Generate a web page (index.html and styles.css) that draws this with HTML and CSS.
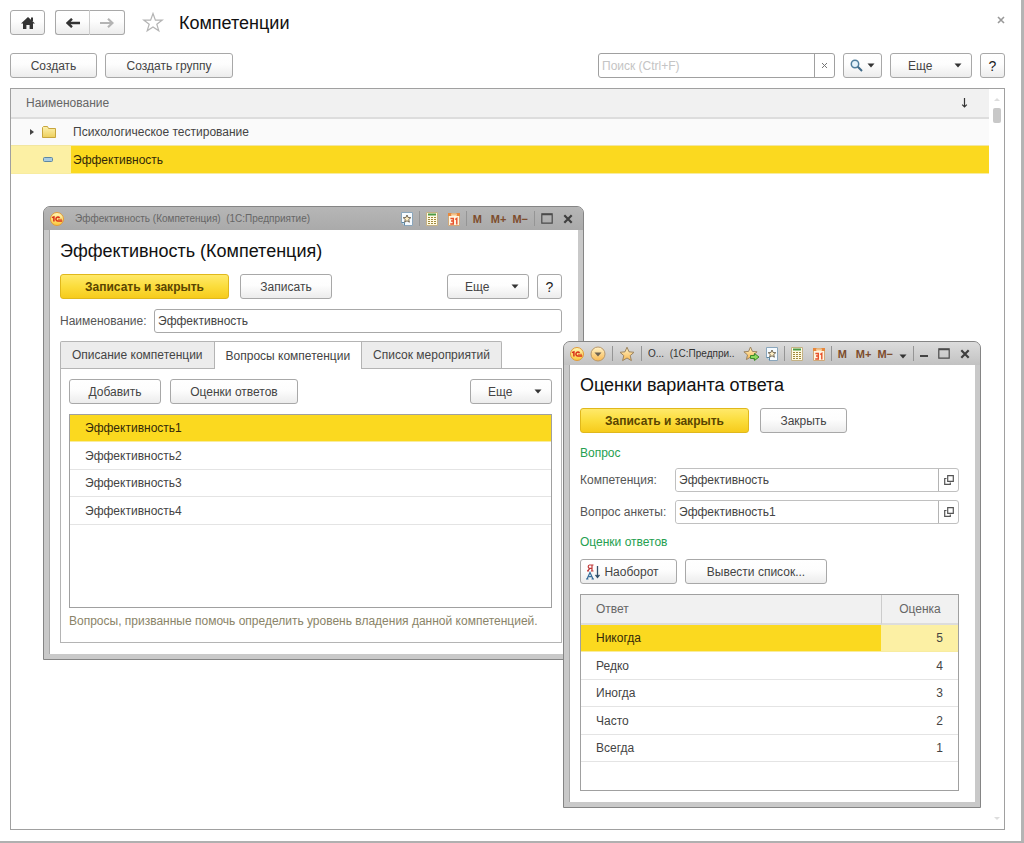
FILE: index.html
```html
<!DOCTYPE html>
<html lang="ru">
<head>
<meta charset="utf-8">
<title>Компетенции</title>
<link rel="stylesheet" href="styles.css">
</head>
<body>
<svg class="defs" width="0" height="0" aria-hidden="true">
  <defs>
    <linearGradient id="gold" x1="0" y1="0" x2="0" y2="1"><stop offset="0" stop-color="#fff3c8"/><stop offset="1" stop-color="#f9b850"/></linearGradient>
    <linearGradient id="logo-fill" x1="0" y1="0" x2="0" y2="1"><stop offset="0" stop-color="#fff8b8"/><stop offset="1" stop-color="#fbc83a"/></linearGradient>
    <linearGradient id="folder" x1="0" y1="0" x2="0" y2="1"><stop offset="0" stop-color="#fdf2b0"/><stop offset="1" stop-color="#edcf5c"/></linearGradient>
    <symbol id="logo" viewBox="0 0 14 14"><circle cx="7" cy="7" r="6.5" fill="url(#logo-fill)" stroke="#e09a3a"/><path d="M2 5.600L3.900 4.800V9.600M9.600 5.900A2 2 0 1 0 8 9H12.200" fill="none" stroke="#d8301a" stroke-width="1.500"/><path d="M8 7.300H12" stroke="#d8301a" stroke-width=".7"/></symbol>
    <symbol id="page-star" viewBox="0 0 12 14"><path d="M.5 .5H11.5V13.5H3.500L.5 10.500Z" fill="#f6fbff" stroke="#8aa6bc"/><path d="M.5 10.500H3.500V13.500" fill="#cfe0ec" stroke="#5d87a3"/><path d="M6 3l1.100 2.500 2.700.2-2.100 1.800.7 2.700L6 8.800l-2.400 1.400.7-2.700-2.100-1.800 2.700-.2Z" fill="#ffefc4" stroke="#665b4a" stroke-width=".9"/></symbol>
    <symbol id="calc" viewBox="0 0 12 14"><path d="M.5 .5H11.5V13.5H.5Z" fill="#fffae4" stroke="#c4b184"/><path d="M2 2.500H10" stroke="#4d9a44" stroke-width="2"/><path d="M2 5.500H10M2 7.500H10M2 9.500H10M2 11.500H10" stroke="#a08a3c" stroke-width="1.200" stroke-dasharray="2 1"/></symbol>
    <symbol id="calendar" viewBox="0 0 12 14"><path d="M.5 1.500H11.5V13.5H.5Z" fill="#fff5e0" stroke="#d0a878"/><path d="M0 2.500H3.500M8.500 2.500H12" stroke="#e8883c" stroke-width="3"/><path d="M3.500 2.500H8.500" stroke="#f4c088" stroke-width="2"/><path d="M2.400 6.500H5.300V12H2.200M3 9H5.300M7.200 7.500L8.800 6.300V12.600" fill="none" stroke="#e8502a" stroke-width="1.400"/></symbol>
    <symbol id="maximize" viewBox="0 0 12 11"><path d="M.8 .8H11.2V10.2H.8Z" fill="none" stroke="#4a4a4a" stroke-width="1.2"/><path d="M1 1.5H11" stroke="#4a4a4a" stroke-width="1.5"/></symbol>
    <symbol id="close" viewBox="0 0 10 10"><path d="M1.3 1.3L8.7 8.7M8.7 1.3L1.3 8.7" stroke="#3f3f3f" stroke-width="2.2"/></symbol>
    <symbol id="caret" viewBox="0 0 8 5"><path d="M.5 .5H7.500L4 4.500Z" fill="#333"/></symbol>
    <symbol id="open" viewBox="0 0 10 10"><path d="M3.7 .7H9.3V6.3H3.7ZM2.5 3.5H.7V9.3H6.3V7.5" fill="none" stroke="#555" stroke-width="1.2"/></symbol>
    <symbol id="gold-star" viewBox="0 0 16 16"><path d="M8 1.2l2 4.6 5 .5-3.8 3.3 1.2 5L8 12l-4.400 2.600 1.200-5L1 6.300l5-.5Z" fill="url(#gold)" stroke="#9c8460"/></symbol>
  </defs>
</svg>

<main class="page">
  <header class="page-head">
    <button class="btn nav" aria-label="Домой"><svg width="14" height="12" viewBox="0 0 14 12"><path d="M7 0L14 6.400H12V12H8.600V8H5.400V12H2V6.400H0L7 0Z" fill="#333"/><path d="M10 .6H12V4H10Z" fill="#333"/></svg></button>
    <div class="nav-pair">
      <button class="btn nav" aria-label="Назад"><svg width="14" height="10" viewBox="0 0 14 10"><path d="M14 5H3M6 .8L1.600 5 6 9.200" fill="none" stroke="#333" stroke-width="2.400"/></svg></button>
      <button class="btn nav" aria-label="Вперед" disabled><svg width="14" height="10" viewBox="0 0 14 10"><path d="M0 5H11M8 .8L12.400 5 8 9.200" fill="none" stroke="#b4b4b4" stroke-width="2.200"/></svg></button>
    </div>
    <svg class="fav" width="22" height="21" viewBox="0 0 22 21"><path d="M11 1.500L13.400 8.100 20.300 8.100 14.800 12.200 16.800 18.800 11 14.900 5.200 18.800 7.200 12.200 1.700 8.100 8.600 8.100Z" fill="#fff" stroke="#b4b4b4" stroke-width="1.200"/></svg>
    <h1 class="title">Компетенции</h1>
    <button class="page-close" aria-label="Закрыть"><svg width="8" height="8" viewBox="0 0 8 8"><path d="M1 1L7 7M7 1L1 7" stroke="#999" stroke-width="1.600"/></svg></button>
  </header>

  <div class="toolbar">
    <button class="btn">Создать</button>
    <button class="btn w-128">Создать группу</button>
    <div class="search">
      <input type="text" placeholder="Поиск (Ctrl+F)" aria-label="Поиск">
      <button aria-label="Очистить"><svg width="7" height="7" viewBox="0 0 7 7"><path d="M1 1L6 6M6 1L1 6" stroke="#777"/></svg></button>
    </div>
    <button class="btn find" aria-label="Найти"><svg width="13" height="13" viewBox="0 0 13 13"><circle cx="5" cy="5" r="3.700" fill="#e4f2fa" stroke="#4f7d9c" stroke-width="1.500"/><path d="M7.800 7.800L12 12" stroke="#3f6a88" stroke-width="2"/></svg><svg width="8" height="5"><use href="#caret"/></svg></button>
    <button class="btn more">Еще<svg width="8" height="5"><use href="#caret"/></svg></button>
    <button class="btn help">?</button>
  </div>

  <section class="list">
    <table class="grid">
      <thead><tr><th colspan="2"><div class="sort-head">Наименование<svg width="7" height="10" viewBox="0 0 7 10"><path d="M3.500 0V9M1.200 6.600L3.500 9 5.800 6.600" fill="none" stroke="#333" stroke-width="1.200"/></svg></div></th></tr></thead>
      <tbody>
        <tr class="group"><td class="mark"><div class="marks"><svg width="4" height="6" viewBox="0 0 4 6"><path d="M0 0L4 3 0 6Z" fill="#444"/></svg><svg width="14" height="12" viewBox="0 0 14 12"><path d="M.5 11.500V1.500L1.500 .5H5.500L6.500 2.500H13.500V11.500Z" fill="url(#folder)" stroke="#c7a53d"/></svg></div></td><td>Психологическое тестирование</td></tr>
        <tr class="selected"><td class="mark"><div class="marks item"><svg width="10" height="5" viewBox="0 0 10 5"><rect x=".5" y=".5" width="9" height="4" rx="1" fill="#a9cbe0" stroke="#5d87a3"/></svg></div></td><td>Эффективность</td></tr>
      </tbody>
    </table>
    <div class="scroll"><svg width="6" height="4" viewBox="0 0 6 4"><path d="M0 4L3 1 6 4Z" fill="#ddd"/></svg><span class="thumb"></span><svg class="down" width="6" height="4" viewBox="0 0 6 4"><path d="M0 0L3 3 6 0Z" fill="#ddd"/></svg></div>
  </section>
</main>

<section class="window competence">
  <div class="titlebar">
    <svg width="14" height="14"><use href="#logo"/></svg>
    <span class="caption">Эффективность (Компетенция)&nbsp; (1С:Предприятие)</span>
    <span class="tools">
      <svg width="12" height="14"><use href="#page-star"/></svg><i></i>
      <svg width="12" height="14"><use href="#calc"/></svg>
      <svg class="cal" width="12" height="14"><use href="#calendar"/></svg><i></i>
      <b class="mem">M</b><b>M+</b><b>M−</b><i></i>
      <svg class="spaced" width="12" height="11"><use href="#maximize"/></svg>
      <svg width="10" height="10"><use href="#close"/></svg>
    </span>
  </div>
  <div class="body">
    <h2 class="title">Эффективность (Компетенция)</h2>
    <div class="actions">
      <button class="btn primary">Записать и закрыть</button>
      <button class="btn w-92">Записать</button>
      <button class="btn more push">Еще<svg width="8" height="5"><use href="#caret"/></svg></button>
      <button class="btn help">?</button>
    </div>
    <div class="field name"><label for="name">Наименование:</label><input id="name" type="text" value="Эффективность"></div>
    <div class="tabs" role="tablist">
      <button role="tab">Описание компетенции</button>
      <button role="tab" class="active" aria-selected="true">Вопросы компетенции</button>
      <button role="tab">Список мероприятий</button>
    </div>
    <div class="panel">
      <div class="actions">
        <button class="btn w-92">Добавить</button>
        <button class="btn w-128">Оценки ответов</button>
        <button class="btn more push">Еще<svg width="8" height="5"><use href="#caret"/></svg></button>
      </div>
      <ul class="questions">
        <li class="current">Эффективность1</li>
        <li>Эффективность2</li>
        <li>Эффективность3</li>
        <li>Эффективность4</li>
      </ul>
      <p class="hint">Вопросы, призванные помочь определить уровень владения данной компетенцией.</p>
    </div>
  </div>
</section>

<section class="window scores">
  <div class="titlebar">
    <svg width="14" height="14"><use href="#logo"/></svg>
    <svg width="16" height="16" viewBox="0 0 16 16"><circle cx="8" cy="8" r="7" fill="url(#gold)" stroke="#b8986c"/><path d="M4.500 6.500H11.500L8 10.500Z" fill="#6c6252"/></svg><i></i>
    <svg width="16" height="16"><use href="#gold-star"/></svg><i></i>
    <span class="caption">О...&nbsp; (1С:Предпри..</span>
    <span class="tools">
      <svg width="17" height="16" viewBox="0 0 17 16"><path d="M7.500 1l1.900 4.400 4.700.4-3.600 3.100 1.100 4.700-4.100-2.500-4.100 2.500 1.100-4.700L.9 5.800l4.700-.4Z" fill="url(#gold)" stroke="#9c8460"/><path d="M7.500 9.500H11.500V7.500L16 11 11.500 14.500V12.500H7.500Z" fill="#8edb5e" stroke="#3c8a2c"/></svg>
      <svg width="12" height="14"><use href="#page-star"/></svg><i></i>
      <svg width="12" height="14"><use href="#calc"/></svg>
      <svg class="cal" width="12" height="14"><use href="#calendar"/></svg><i></i>
      <b class="mem">M</b><b>M+</b><b>M−</b>
      <svg class="low" width="8" height="5"><use href="#caret"/></svg><i></i>
      <svg class="low spaced" width="8" height="3" viewBox="0 0 8 3"><path d="M0 1H8" stroke="#444" stroke-width="2"/></svg>
      <svg class="spaced" width="12" height="11"><use href="#maximize"/></svg>
      <svg width="10" height="10"><use href="#close"/></svg>
    </span>
  </div>
  <div class="body">
    <h2 class="title">Оценки варианта ответа</h2>
    <div class="actions">
      <button class="btn primary">Записать и закрыть</button>
      <button class="btn">Закрыть</button>
    </div>
    <h3 class="group-title">Вопрос</h3>
    <div class="field link"><label for="comp">Компетенция:</label><span class="combo"><input id="comp" type="text" value="Эффективность"><button aria-label="Открыть"><svg width="10" height="10"><use href="#open"/></svg></button></span></div>
    <div class="field link"><label for="quest">Вопрос анкеты:</label><span class="combo"><input id="quest" type="text" value="Эффективность1"><button aria-label="Открыть"><svg width="10" height="10"><use href="#open"/></svg></button></span></div>
    <h3 class="group-title">Оценки ответов</h3>
    <div class="actions tight">
      <button class="btn reverse"><svg width="15" height="16" viewBox="0 0 15 16"><path d="M6 7V1H3.500A1.700 1.700 0 0 0 3.500 4.300H6M4 4.300L1.500 7M1 7H3M5 7H7.500M5 1H7.500" fill="none" stroke="#c03a3a" stroke-width="1.200"/><path d="M1 15L4 8.500 7 15M2.200 12.700H5.800M0 15H2.500M5.500 15H8" fill="none" stroke="#386f9c" stroke-width="1.200"/><path d="M11.500 2V13M9.500 10.800L11.500 13.500 13.500 10.800" fill="none" stroke="#31506b" stroke-width="1.300"/></svg>Наоборот</button>
      <button class="btn w-142">Вывести список...</button>
    </div>
    <div class="answers">
      <table class="grid">
        <thead><tr><th>Ответ</th><th class="score">Оценка</th></tr></thead>
        <tbody>
          <tr class="selected"><td>Никогда</td><td class="score">5</td></tr>
          <tr><td>Редко</td><td class="score">4</td></tr>
          <tr><td>Иногда</td><td class="score">3</td></tr>
          <tr><td>Часто</td><td class="score">2</td></tr>
          <tr><td>Всегда</td><td class="score">1</td></tr>
        </tbody>
      </table>
    </div>
  </div>
</section>
</body>
</html>
```
FILE: styles.css
```css
* { box-sizing: border-box; }
body {
  margin: 0;
  background: #fff;
  color: #444;
  font: 12px/16px "Liberation Sans", Arial, sans-serif;
}
button, input { font: inherit; color: inherit; margin: 0; }
svg { flex: none; display: block; }
.defs { position: absolute; }
h1, h2, h3, p, ul { margin: 0; padding: 0; font-weight: normal; }
.title { font-size: 18px; line-height: 24px; color: #111; white-space: nowrap; }

.page {
  display: flex;
  flex-direction: column;
  min-height: 100vh;
  padding: 10px 16px 11px 10px;
  border-right: 3px solid #b4b4b4;
  border-bottom: 2px solid #b0b0b0;
}
.page-head { display: flex; align-items: center; height: 25px; }
.fav { margin: 0 15px 0 17px; }
.page-close { margin-left: auto; align-self: flex-start; padding: 6px 0; border: 0; background: none; }

.btn {
  display: inline-flex;
  align-items: center;
  justify-content: center;
  flex: none;
  width: 87px;
  height: 25px;
  padding: 0;
  border: 1px solid #a8a8a8;
  border-radius: 3px;
  background: linear-gradient(#fff, #fdfdfd 45%, #ececec);
  color: #444;
  white-space: nowrap;
}
.btn.nav { width: 35px; }
.nav-pair { display: flex; margin-left: 10px; }
.nav-pair .btn:first-child { border-radius: 3px 0 0 3px; border-right-color: #ccc; }
.nav-pair .btn:last-child { border-radius: 0 3px 3px 0; border-left: 0; }
.btn.w-92 { width: 92px; }
.btn.w-128 { width: 128px; }
.btn.w-142 { width: 142px; }
.btn.primary {
  width: 169px;
  border-color: #e0b81c;
  background: linear-gradient(#ffe96a, #fbdd3c 50%, #f6cb1c);
  color: #5a4500;
  font-weight: bold;
}
.btn.more { width: 82px; justify-content: space-between; padding: 0 9px 0 17px; }
.btn.help { width: 25px; font-size: 14px; color: #222; }
.btn.find { width: 39px; gap: 4px; }
.btn.reverse { width: 97px; gap: 3px; padding-right: 12px; }

.toolbar { display: flex; gap: 8px; margin-top: 18px; }
.search {
  display: flex;
  width: 237px;
  height: 25px;
  margin-left: auto;
  border: 1px solid #a0a0a0;
  border-radius: 3px;
}
.search input { flex: 1; min-width: 0; padding: 0 3px; border: 0; background: none; outline: 0; }
.search input::placeholder { color: #c4c4c4; }
.search button { display: grid; place-items: center; width: 20px; padding: 0; border: 0; border-left: 1px solid #a0a0a0; background: none; }

.list { display: flex; flex: 1; margin-top: 10px; border: 1px solid #a0a0a0; }
.grid { width: 100%; border-collapse: separate; border-spacing: 0; align-self: flex-start; }
.grid th { height: 30px; padding: 0 15px; background: #f1f1f1; border-bottom: 2px solid #ddd; color: #666; font-weight: normal; text-align: left; }
.sort-head { display: flex; justify-content: space-between; padding-right: 6px; align-items: center; }
.grid td { height: 27px; padding: 0 15px; border-bottom: 1px solid #e4e4e4; }
.grid tr:nth-child(even) td { height: 28px; }
.list .grid td { padding: 0 2px; }
.list .grid td.mark { width: 60px; }
.grid .group td { background: #fafafa; border-color: #f2e6a0; }
.marks { display: flex; align-items: center; gap: 8px; padding-left: 17px; }
.marks.item { padding-left: 30px; }
.grid .selected td { background: #fbd91f; color: #33290a; border-color: #f8eca0; }
.grid .selected td.mark, .grid .selected td.score { background: #fcf0a4; color: #444; }
.scroll { display: flex; flex-direction: column; align-items: center; width: 15px; padding: 8px 0; }
.thumb { width: 8px; height: 15px; margin-top: 7px; border-radius: 2px; background: #c8c8c8; }
.down { margin-top: auto; }

.window {
  position: absolute;
  border: 1px solid #858585;
  border-radius: 7px 7px 0 0;
  background: #c9c9c9;
  padding: 0 5px 5px;
}
.competence { left: 43px; top: 206px; width: 541px; }
.scores { left: 563px; top: 341px; width: 418px; }
.titlebar {
  display: flex;
  align-items: center;
  gap: 6px;
  height: 23px;
  margin: 0 -5px;
  padding: 0 10px 0 6px;
  border-radius: 6px 6px 0 0;
  background: linear-gradient(#b6b6b6, #aaa);
  font-size: 10px;
  white-space: nowrap;
}
.competence .caption { color: #666; padding-left: 5px; }
.scores .titlebar { background: linear-gradient(#dcdcdc, #c2c2c2); }
.scores .caption { color: #333; margin-right: -6px; }
.titlebar i { width: 1px; height: 15px; background: #959595; }
.tools { display: flex; align-items: center; gap: 6px; margin-left: auto; }
.tools b { color: #7d4c2c; font-size: 11px; }
.tools .mem { margin-right: 3px; }
.tools .cal { margin-left: 4px; }
.tools .spaced { margin-right: 4px; }
.tools .low { margin-top: 6px; }
.body { background: #fff; padding: 9px 16px 11px 10px; border-left: 1px solid #aaa; }
.scores .body { padding-top: 8px; }

.actions { display: flex; gap: 11px; margin-top: 11px; }
.push { margin-left: auto; }
.push + .help { margin-left: -3px; }
.field { display: flex; align-items: center; margin-top: 10px; }
.field label { color: #555; white-space: nowrap; }
.field input { flex: 1; min-width: 0; height: 24px; padding: 0 3px; border: 1px solid #a8a8a8; border-radius: 3px; background: #fff; }
.name label { width: 94px; }

.tabs { display: flex; margin-top: 8px; }
.tabs button { height: 27px; padding: 0 11px; border: 1px solid #b4b4b4; border-left-width: 0; border-bottom: 0; background: #ececec; white-space: nowrap; }
.tabs button:first-child { border-left-width: 1px; border-radius: 2px 0 0 0; }
.tabs button:last-child { border-radius: 0 2px 0 0; }
.tabs .active { height: 28px; margin-bottom: -1px; background: #fff; position: relative; }
.panel { border: 1px solid #b4b4b4; padding: 0 9px 13px 8px; }
.panel .actions { margin-top: 10px; gap: 9px; }
.questions { height: 194px; margin-top: 10px; border: 1px solid #a0a0a0; list-style: none; }
.questions li { height: 28px; padding: 6px 15px; border-bottom: 1px solid #e4e4e4; }
.questions li:nth-child(odd) { height: 27px; padding-top: 5px; }
.questions .current { background: #fbd91f; color: #33290a; border-color: #f8eca0; }
.hint { margin-top: 5px; color: #8a8468; white-space: nowrap; }

.group-title { margin-top: 12px; font-size: 12px; line-height: 16px; color: #25a050; }
.link { margin-top: 8px; }
.link label { width: 95px; }
.group-title + .link { margin-top: 7px; }
.combo { display: flex; flex: 1; border: 1px solid #c0c0c0; border-radius: 3px; }
.combo input { height: 22px; border: 0; }
.combo button { display: grid; place-items: center; width: 20px; padding: 0; border: 0; border-left: 1px solid #b4b4b4; background: none; }
.tight { margin-top: 9px; gap: 8px; }
.scores .group-title ~ .group-title { margin-top: 10px; }
.answers { height: 197px; margin-top: 10px; border: 1px solid #a0a0a0; }
.answers .score { width: 77px; text-align: right; }
.answers th.score { border-left: 1px solid #ccc; text-align: center; padding: 0 0 0 -3px; }
.answers thead .score { padding: 0; }
```
